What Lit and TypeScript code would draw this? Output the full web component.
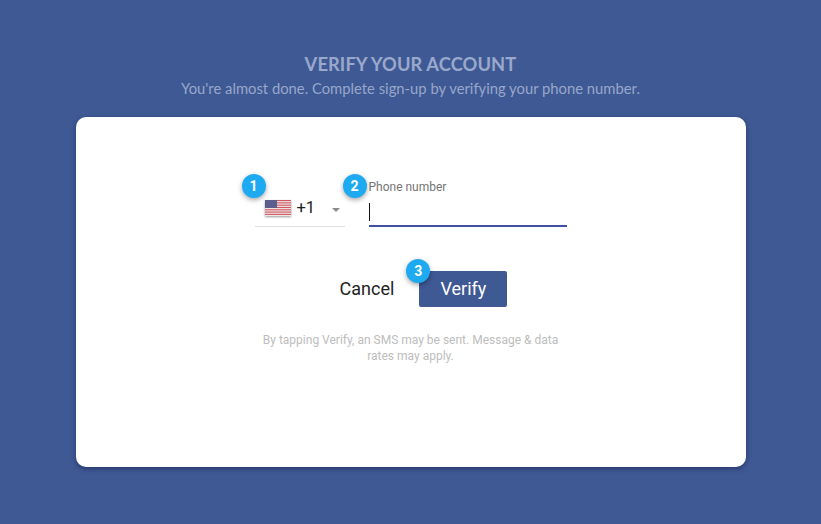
import { LitElement, html, css, svg } from "lit";
import { customElement } from "lit/decorators.js";

const stripes = [0, 1, 2, 3, 4, 5, 6].map(
  (i) => svg`<rect x="0" y="${i * 2.3}" width="26" height="1.15" fill="#cf5a64"></rect>`
);

@customElement("app-root")
export class AppRoot extends LitElement {
  static styles = css`
    :host {
      display: flex;
      flex-direction: column;
      align-items: center;
      width: 821px;
      height: 524px;
      box-sizing: border-box;
      padding-top: 52px;
      background: #3f5995;
      overflow: hidden;
      font-family: Roboto, "Liberation Sans", sans-serif;
    }
    .title {
      font-family: Lato, "Open Sans", sans-serif;
      font-size: 18.3px;
      font-weight: 700;
      line-height: 24px;
      color: #9aa9cb;
      margin: 0;
      letter-spacing: 0.1px;
    }
    .subtitle {
      font-family: Lato, "Open Sans", sans-serif;
      font-size: 14.8px;
      line-height: 20px;
      margin: 2px 0 0;
      color: #98a7c9;
    }
    .card {
      width: 670px;
      height: 350px;
      box-sizing: border-box;
      margin-top: 19px;
      padding-top: 60px;
      background: #fff;
      border-radius: 10px;
      box-shadow: 0 2px 5px rgba(20, 30, 70, 0.55);
      display: flex;
      flex-direction: column;
      align-items: center;
    }
    .fields {
      display: flex;
      align-items: flex-end;
      gap: 24px;
    }
    .select {
      position: relative;
      width: 90px;
      height: 50px;
      box-sizing: border-box;
      border-bottom: 1px solid #e0e0e0;
      display: flex;
      align-items: flex-end;
      padding: 0 0 8px 10px;
    }
    .flag {
      display: block;
      width: 26px;
      height: 16px;
      margin-bottom: 2px;
      filter: drop-shadow(0 1px 1px rgba(0, 0, 0, 0.4));
    }
    .code {
      font-size: 16.5px;
      line-height: 20px;
      color: #222;
      margin-left: 6px;
    }
    .arrow {
      position: absolute;
      left: 77px;
      top: 31px;
      width: 0;
      height: 0;
      border-left: 4px solid transparent;
      border-right: 4px solid transparent;
      border-top: 4px solid #8a8a8a;
    }
    .phone {
      position: relative;
      width: 198px;
    }
    .label {
      font-size: 12px;
      line-height: 14px;
      color: #757575;
      margin-bottom: 6px;
    }
    .input {
      height: 27px;
      box-sizing: border-box;
      border-bottom: 2px solid #3f51a5;
      padding-top: 3px;
    }
    .caret {
      width: 1px;
      height: 18px;
      background: #111;
    }
    .badge {
      position: absolute;
      width: 24px;
      height: 24px;
      border-radius: 50%;
      background: #1eaaf1;
      color: #fff;
      font-size: 14px;
      font-weight: 700;
      line-height: 24px;
      text-align: center;
      box-shadow: 0 2px 5px rgba(0, 0, 0, 0.35);
    }
    .b1 { left: -13px; top: -3px; }
    .b2 { left: -26px; top: -6px; }
    .b3 { left: -13px; top: -12px; }
    .actions {
      display: flex;
      align-items: center;
      gap: 25px;
      margin-top: 44px;
      margin-left: 26px;
    }
    .cancel {
      font-size: 18px;
      line-height: 36px;
      color: #222;
    }
    .verify {
      position: relative;
      width: 88px;
      height: 36px;
      border-radius: 2px;
      background: #3f5995;
      color: #fff;
      font-size: 18px;
      line-height: 36px;
      text-align: center;
    }
    .note {
      width: 300px;
      margin: 25px 0 0;
      font-size: 12px;
      line-height: 16px;
      color: #bdbdbd;
      text-align: center;
    }
  `;

  render() {
    return html`
      <h1 class="title">VERIFY YOUR ACCOUNT</h1>
      <p class="subtitle">You're almost done. Complete sign-up by verifying your phone number.</p>
      <div class="card">
        <div class="fields">
          <div class="select">
            <span class="badge b1">1</span>
            <svg class="flag" viewBox="0 0 26 16" aria-hidden="true">
              <rect width="26" height="16" fill="#f1e9e9"></rect>
              ${stripes}
              <rect width="12" height="8" fill="#5a5f8f"></rect>
            </svg>
            <span class="code">+1</span>
            <span class="arrow"></span>
          </div>
          <div class="phone">
            <span class="badge b2">2</span>
            <div class="label">Phone number</div>
            <div class="input"><div class="caret"></div></div>
          </div>
        </div>
        <div class="actions">
          <span class="cancel">Cancel</span>
          <div class="verify"><span class="badge b3">3</span>Verify</div>
        </div>
        <p class="note">By tapping Verify, an SMS may be sent. Message &amp; data rates may apply.</p>
      </div>
    `;
  }
}
